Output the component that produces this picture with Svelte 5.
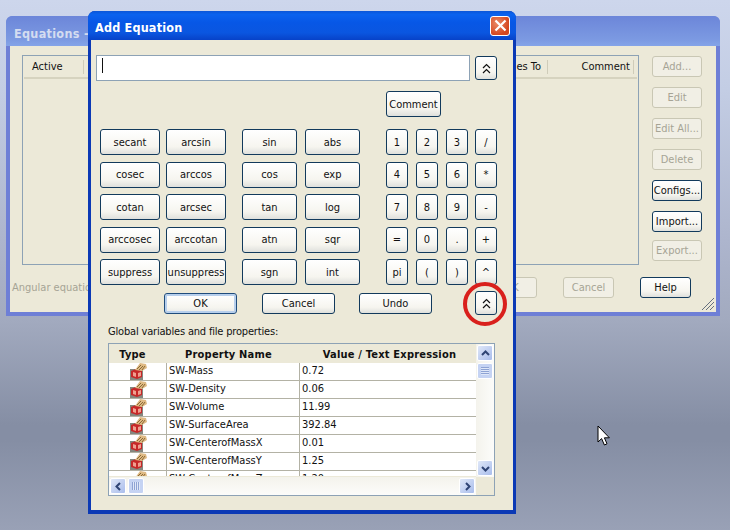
<script>
  const colsA = [
    [['secant','arcsin'],['sin','abs'],['1','2','3','/']],
    [['cosec','arccos'],['cos','exp'],['4','5','6','*']],
    [['cotan','arcsec'],['tan','log'],['7','8','9','-']],
    [['arccosec','arccotan'],['atn','sqr'],['=','0','.','+']],
    [['suppress','unsuppress'],['sgn','int'],['pi','(',')','^']]
  ];
  const rows = [
    ['SW-Mass','0.72'],['SW-Density','0.06'],['SW-Volume','11.99'],['SW-SurfaceArea','392.84'],
    ['SW-CenterofMassX','0.01'],['SW-CenterofMassY','1.25'],['SW-CenterofMassZ','1.20']
  ];
  const sideBtns = [['Add...',true],['Edit',true],['Edit All...',true],['Delete',true],['Configs...',false],['Import...',false],['Export...',true]];
</script>

{#snippet dbl()}
  <svg width="9" height="11" viewBox="0 0 9 11" fill="none" stroke="#111" stroke-width="1.2"><path d="M1 5 4.5 1.5 8 5M1 10 4.5 6.5 8 10"/></svg>
{/snippet}

{#snippet cube()}
  <svg width="18" height="17" viewBox="0 0 18 17">
    <rect x="1" y="6" width="13" height="11" fill="#85877f"/>
    <path d="M2 8 7 6 13 8 13 14 8 16 2 14Z" fill="#c62828"/>
    <path d="M4 9 7 10 7 14 4 13ZM9 10 12 9 12 13 9 14Z" fill="#f0a090"/>
    <path d="M6 7 11 0 17 1 18 5 13 8Z" fill="#dfba84"/>
    <path d="M8 6 12 2M10 7 14 3M13 7 16 3" stroke="#8a6a38" stroke-width="1"/>
  </svg>
{/snippet}

{#snippet arrow(d)}
  <svg width="9" height="9" viewBox="0 0 9 9" fill="none" stroke="#2f4474" stroke-width="2"><path d={d}/></svg>
{/snippet}

<div class="desktop">
  <section class="win back">
    <header class="back-title">Equations - Active</header>
    <div class="back-body">
      <div class="back-main">
        <div class="list">
          <div class="list-head">
            <span class="lh active">Active</span>
            <span class="lh to">es To</span>
            <span class="lh comment">Comment</span>
          </div>
        </div>
        <div class="side">
          {#each sideBtns as [label, off]}
            <button class="xp side-btn" class:off>{label}</button>
          {/each}
        </div>
      </div>
      <div class="back-foot">
        <span class="angular">Angular equations</span>
        <span class="foot-btns">
          <button class="xp foot-btn off">OK</button>
          <button class="xp foot-btn off">Cancel</button>
          <button class="xp foot-btn">Help</button>
        </span>
      </div>
      <svg class="grip" width="14" height="14" viewBox="0 0 14 14" stroke="#66707f"><path d="M13 1 1 13M13 5 5 13M13 9 9 13"/></svg>
    </div>
  </section>

  <section class="win front">
    <header class="front-title">
      <span>Add Equation</span>
      <span class="close">
        <svg width="13" height="13" viewBox="0 0 13 13" stroke="#fff" stroke-width="2.2"><path d="M1.5 1.5 11.5 11.5M11.5 1.5 1.5 11.5"/></svg>
      </span>
    </header>
    <div class="front-body">
      <div class="input-row">
        <div class="input"><i class="caret"></i></div>
        <button class="xp sq">{@render dbl()}</button>
      </div>
      <div class="comment-row"><button class="xp comment-btn">Comment</button></div>
      <div class="pad">
        {#each colsA as [a, b, c]}
          <div class="pad-row">
            <div class="g g1">{#each a as t}<button class="xp">{t}</button>{/each}</div>
            <div class="g g2">{#each b as t}<button class="xp">{t}</button>{/each}</div>
            <div class="g g3">{#each c as t}<button class="xp">{t}</button>{/each}</div>
          </div>
        {/each}
      </div>
      <div class="action-row">
        <button class="xp act ok">OK</button>
        <button class="xp act">Cancel</button>
        <button class="xp act undo">Undo</button>
        <div class="circled">
          <button class="xp sq">{@render dbl()}</button>
          <i class="ring"></i>
        </div>
      </div>
      <div class="glabel">Global variables and file properties:</div>
      <div class="table">
        <div class="table-top">
          <div class="table-view">
            <div class="t-head">
              <span class="h1">Type</span><span class="h2">Property Name</span><span class="h3">Value / Text Expression</span>
            </div>
            <div class="t-rows">
              {#each rows as [name, val]}
                <div class="t-row">
                  <span class="ic">{@render cube()}</span>
                  <span class="nm">{name}</span>
                  <span class="vl">{val}</span>
                </div>
              {/each}
            </div>
          </div>
          <div class="vbar">
            <span class="sb-btn">{@render arrow('M1 6 4.5 2.5 8 6')}</span>
            <span class="sb-thumb v"></span>
            <span class="sb-space"></span>
            <span class="sb-btn">{@render arrow('M1 3 4.5 6.5 8 3')}</span>
          </div>
        </div>
        <div class="hbar">
          <span class="sb-btn">{@render arrow('M6 1 2.5 4.5 6 8')}</span>
          <span class="sb-thumb h"></span>
          <span class="sb-space"></span>
          <span class="sb-btn">{@render arrow('M3 1 6.5 4.5 3 8')}</span>
        </div>
      </div>
    </div>
  </section>

  <svg class="cursor" width="14" height="21" viewBox="0 0 14 21"><path d="M1 1V17L4.6 13.6 7.4 20 10 18.8 7.4 12.8H12.4Z" fill="#fff" stroke="#000"/></svg>
</div>

<style>
  :global(body) { margin: 0; }
  .desktop {
    position: relative; width: 730px; height: 530px; overflow: hidden;
    background: linear-gradient(#cdd6ec 0, #c3cde4 90px, #adb5cd 240px, #a2aabf 320px, #858ea4 425px, #858ea4 440px, #99a1b6 530px);
    font: 11px "DejaVu Sans Condensed", "DejaVu Sans", sans-serif; color: #111;
  }
  .win { position: absolute; box-sizing: border-box; display: flex; flex-direction: column; }
  button { font: inherit; color: inherit; padding: 0; margin: 0; }
  .xp {
    box-sizing: border-box; height: 26px; border: 1px solid #123a5c; border-radius: 3px;
    background: linear-gradient(#fff, #f6f5ef 70%, #dfe0dc);
    white-space: nowrap; overflow: hidden;
  }

  .back { left: 6px; top: 16px; width: 714px; height: 300px; border-radius: 7px 7px 0 0; background: #6e7fd6; }
  .back-title {
    height: 30px; flex: none; padding: 10px 0 0 8px; box-sizing: border-box; border-radius: 6px 6px 0 0;
    background: linear-gradient(#6c86d9, #7c9ae2 80%, #84a4e8);
    color: #d4dcf0; font: bold 12.5px "DejaVu Sans Condensed", "DejaVu Sans", sans-serif; letter-spacing: .3px;
  }
  .back-body {
    position: relative; flex: 1; margin: 0 4px 4px 4px; background: #ece9d8; display: flex; flex-direction: column;
    padding: 9px 0 0 13px; box-sizing: border-box;
  }
  .back-main { display: flex; }
  .list { width: 617px; height: 210px; margin-left: -1px; box-sizing: border-box; border: 1px solid #8da2b5; padding-top: 1px; padding-left: 1px; }
  .list-head { height: 20px; border-bottom: 2px solid #d6d3bf; display: flex; align-items: center; margin-right: 1px; position: relative; }
  .lh { border-right: 1px solid #cfccb9; height: 14px; line-height: 13px; }
  .active { width: 60px; padding-left: 8px; margin-right: auto; box-sizing: border-box; }
  .to { width: 50px; text-align: right; padding-right: 6px; box-sizing: border-box; }
  .comment { width: 86px; text-align: right; padding-right: 3px; box-sizing: border-box; margin-right: 3px; }
  .side { margin-left: 13px; padding-top: 1px; display: flex; flex-direction: column; gap: 10px; }
  .side-btn { width: 50px; height: 21px; }
  .side-btn:last-child { margin-top: -2px; }
  .off { border-color: #c9c7b4; color: #a6a495; background: #f1efe5; }
  .back-foot { display: flex; align-items: center; justify-content: space-between; margin-top: 11px; margin-right: 25px; height: 23px; margin-left: -11px; }
  .angular { color: #a6a495; padding-left: 0; }
  .foot-btns { display: flex; gap: 26px; }
  .foot-btn { width: 51px; height: 21px; }
  .grip { position: absolute; right: 1px; bottom: 1px; }

  .front {
    left: 88px; top: 11px; width: 428px; height: 503px; border-radius: 7px 7px 0 0;
    background: #0a3fc4; border: 3px solid #0b39b5; border-top: 0; border-bottom-width: 4px;
  }
  .front-title {
    height: 29px; flex: none; display: flex; justify-content: space-between; align-items: center;
    margin: 0 -3px; box-sizing: border-box; padding: 3px 6px 0 7px; border-radius: 7px 7px 0 0;
    background: linear-gradient(#0b56d8, #0a62ee 12%, #0757e6 40%, #0a56e0 75%, #0742c8);
    color: #fff; font: bold 12.5px "DejaVu Sans Condensed", "DejaVu Sans", sans-serif; letter-spacing: .2px;
  }
  .close {
    width: 20px; height: 20px; margin-top: -3px; box-sizing: border-box; border: 1px solid #fff; border-radius: 3px;
    background: radial-gradient(circle at 35% 35%, #ea8a66, #d5471f 70%);
    display: grid; place-items: center;
  }
  .front-body { flex: 1; background: #ece9d8; padding: 15px 0 0 5px; box-sizing: border-box; }
  .input-row { display: flex; align-items: center; gap: 5px; height: 26px; }
  .input { width: 374px; height: 26px; box-sizing: border-box; background: #fff; border: 1px solid #8da2b5; padding: 2px 0 0 5px; }
  .caret { display: block; width: 1px; height: 15px; background: #111; }
  .sq { width: 22px; height: 24px; display: grid; place-items: center; }
  .comment-row { padding-left: 290px; margin-top: 10px; }
  .comment-btn { width: 55px; }
  .pad { margin-top: 12px; display: flex; flex-direction: column; gap: 6.5px; padding-left: 4px; }
  .pad-row { display: flex; }
  .g { display: flex; gap: 6px; }
  .g1 button { width: 60px; }
  .g2 { margin-left: 16px; gap: 8px; }
  .g2 button { width: 55px; }
  .g3 { margin-left: 26px; gap: 8px; }
  .g3 button { width: 22px; }
  .g3 button:last-child { margin-left: -1px; }
  .action-row { display: flex; height: 24px; margin-top: 6px; padding-left: 68px; gap: 25px; align-items: center; }
  .act { width: 73px; height: 21px; }
  .undo { margin-left: -1px; }
  .ok { border: 1px solid #1f4c7c; box-shadow: inset 0 0 0 2px #b7cfec; background: linear-gradient(#fff, #f6f5ef 70%, #e6e8e8); }
  .circled { position: relative; margin-left: 18px; display: flex; }
  .ring { position: absolute; left: -12px; top: -9px; width: 44px; height: 44px; box-sizing: border-box; border: 4px solid #d9201c; border-radius: 50%; }
  .glabel { margin: 9px 0 0 12px; height: 15px; line-height: 15px; letter-spacing: -.18px; }
  .table { margin: 4px 0 0 12px; width: 387px; height: 153px; box-sizing: border-box; border: 1px solid #8da2b5; display: flex; flex-direction: column; background: #ece9d8; }
  .table-top { display: flex; flex: 1; min-height: 0; }
  .table-view { flex: 1; min-width: 0; overflow: hidden; }
  .t-head { height: 19px; padding-top: 2px; box-sizing: border-box; display: grid; grid-template-columns: 57px 133px 177px; font: bold 11px "DejaVu Sans Condensed", "DejaVu Sans", sans-serif; letter-spacing: .2px; align-items: center; text-align: center; }
  .h1 { padding-right: 10px; }
  .h2 { padding-right: 8px; }
  .h3 { padding-left: 4px; }
  .t-rows { height: 113px; overflow: hidden; background: #fff; }
  .t-row { height: 18px; box-sizing: border-box; border-bottom: 1px solid #b3b2a5; display: grid; grid-template-columns: 57px 133px 177px; }
  .ic { display: grid; place-items: center; overflow: hidden; }
  .nm, .vl { border-left: 1px solid #b3b2a5; padding-left: 2px; line-height: 15px; }
  .vbar { width: 18px; flex: none; display: flex; flex-direction: column; background: linear-gradient(90deg, #f4f3ec, #fcfcfa); }
  .hbar { height: 18px; flex: none; display: flex; background: linear-gradient(#f4f3ec, #fcfcfa); width: 367px; }
  .sb-btn { width: 16px; height: 16px; margin: 1px; flex: none; box-sizing: border-box; border: 1px solid #fff; border-radius: 2px; background: linear-gradient(135deg, #dfe7f8, #a9bdec); display: grid; place-items: center; }
  .sb-thumb { flex: none; box-sizing: border-box; border: 1px solid #fff; border-radius: 2px; background-color: #c5d3f3; background-repeat: no-repeat; background-position: center; }
  .sb-thumb.v { width: 16px; height: 16px; margin: 1px; background-image: repeating-linear-gradient(#8ea3d4 0 1px, #dfe7f8 1px 2px); background-size: 8px 8px; }
  .sb-thumb.h { width: 16px; height: 16px; margin: 1px; background-image: repeating-linear-gradient(90deg, #8ea3d4 0 1px, #dfe7f8 1px 2px); background-size: 8px 8px; }
  .sb-space { flex: 1; }
  .cursor { position: absolute; left: 597px; top: 425px; }
</style>
